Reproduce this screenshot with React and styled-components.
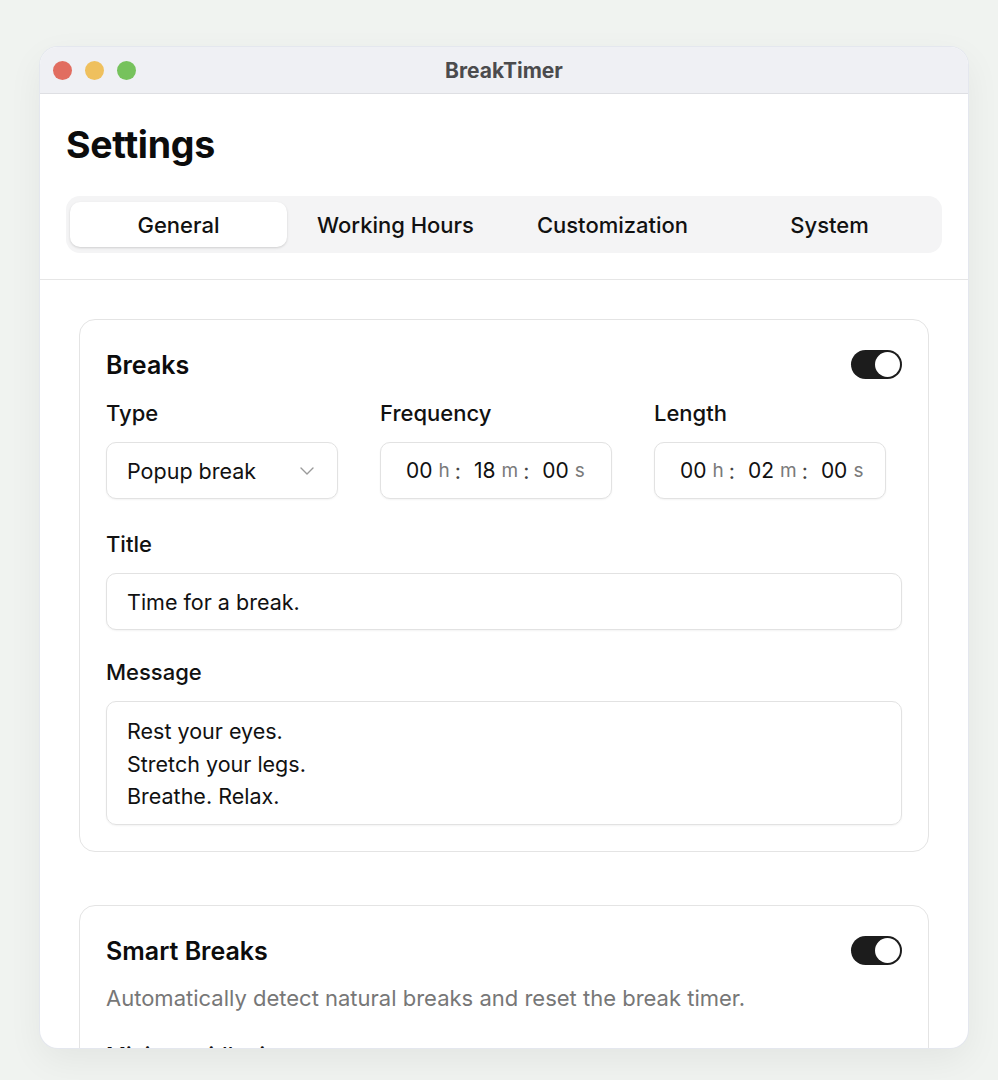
import styled, { createGlobalStyle } from "styled-components";

const GlobalStyle = createGlobalStyle`
  html, body {
    margin: 0;
    padding: 0;
    background: #f0f3f0;
  }
  body {
    font-family: Inter, "Noto Sans", "Liberation Sans", sans-serif;
    color: #111;
  }
`;

const Page = styled.div`
  padding: 47px 30px 32px 40px;
`;

const Window = styled.div`
  width: 928px;
  height: 1001px;
  background: #fff;
  border-radius: 18px;
  overflow: hidden;
  display: flex;
  flex-direction: column;
  box-shadow: 0 0 0 1px #e4e7ee, 0 12px 36px rgba(0, 0, 0, 0.06);
`;

const TitleBar = styled.div`
  height: 46px;
  flex-shrink: 0;
  background: #eff0f4;
  border-bottom: 1px solid #dedfe3;
  display: flex;
  align-items: center;
  position: relative;
  padding-left: 13px;
`;

const Lights = styled.div`
  display: flex;
  gap: 13px;
`;

const Light = styled.span`
  width: 19px;
  height: 19px;
  border-radius: 50%;
  background: ${(p) => p.color};
`;

const WindowTitle = styled.div`
  position: absolute;
  left: 0;
  right: 0;
  text-align: center;
  font-size: 21px;
  font-weight: 700;
  color: #4b4b4d;
`;

const Header = styled.div`
  padding: 30px 26px 26px;
  border-bottom: 1px solid #e6e6e6;
`;

const Heading = styled.h1`
  margin: 0 0 30px;
  font-size: 37.5px;
  line-height: 42px;
  font-weight: 700;
  color: #0c0c0c;
  letter-spacing: -0.3px;
`;

const Tabs = styled.div`
  display: grid;
  grid-template-columns: repeat(4, 1fr);
  padding: 6px 4px;
  background: #f4f4f5;
  border-radius: 14px;
`;

const Tab = styled.div`
  height: 45px;
  display: flex;
  align-items: center;
  justify-content: center;
  font-size: 22px;
  font-weight: 500;
  color: #111;
  border-radius: 10px;
  background: ${(p) => (p.active ? "#fff" : "transparent")};
  box-shadow: ${(p) =>
    p.active ? "0 1px 3px rgba(0,0,0,0.1), 0 1px 2px rgba(0,0,0,0.06)" : "none"};
`;

const Content = styled.div`
  flex: 1;
  overflow: hidden;
  padding: 39px 39px 0;
  display: flex;
  flex-direction: column;
  gap: 53px;
`;

const Card = styled.section`
  border: 1px solid #e4e4e4;
  border-radius: 16px;
  padding: 30px 26px 26px;
  flex-shrink: 0;
`;

const CardHead = styled.div`
  display: flex;
  align-items: center;
  justify-content: space-between;
  height: 29px;
`;

const CardTitle = styled.h2`
  margin: 0;
  font-size: 25px;
  font-weight: 600;
  color: #0c0c0c;
`;

const Switch = styled.div`
  width: 51px;
  height: 29px;
  border-radius: 15px;
  background: #1c1c1c;
  position: relative;
  &::after {
    content: "";
    position: absolute;
    right: 2px;
    top: 2px;
    width: 25px;
    height: 25px;
    border-radius: 50%;
    background: #fff;
  }
`;

const Row = styled.div`
  display: grid;
  grid-template-columns: repeat(3, 248px);
  column-gap: 26px;
  margin-top: 21px;
`;

const Field = styled.div`
  display: flex;
  flex-direction: column;
  margin-top: ${(p) => p.top || 0}px;
`;

const Label = styled.label`
  font-size: 22px;
  font-weight: 500;
  line-height: 26px;
  color: #111;
  margin-bottom: 16px;
`;

const Box = styled.div`
  box-sizing: border-box;
  width: ${(p) => (p.full ? "100%" : "232px")};
  height: 57px;
  border: 1px solid #e2e2e2;
  border-radius: 10px;
  box-shadow: 0 1px 2px rgba(0, 0, 0, 0.05);
  background: #fff;
  display: flex;
  align-items: center;
  padding: 0 20px;
  font-size: 21.5px;
  color: #111;
`;

const SelectBox = styled(Box)`
  justify-content: space-between;
  padding-right: 22px;
`;

const TimeBox = styled(Box)`
  padding-left: 25px;
`;

const Digits = styled.span`
  font-size: 21px;
  color: #111;
`;

const Unit = styled.span`
  font-size: 19px;
  color: #7a7a7a;
  margin: 0 5px 0 6px;
`;

const Colon = styled.span`
  color: #444;
  margin-right: 13px;
`;

const MessageBox = styled.div`
  box-sizing: border-box;
  width: 100%;
  height: 124px;
  border: 1px solid #e2e2e2;
  border-radius: 10px;
  box-shadow: 0 1px 2px rgba(0, 0, 0, 0.05);
  padding: 13px 20px;
  font-size: 21.5px;
  line-height: 32.5px;
  color: #111;
  white-space: pre-line;
`;

const Description = styled.p`
  margin: 19px 0 0;
  font-size: 22px;
  line-height: 28px;
  color: #777;
`;

const Chevron = () => (
  <svg width="16" height="10" viewBox="0 0 16 10" fill="none">
    <path d="M2 2l6 6 6-6" stroke="#9a9a9a" strokeWidth="1.4" strokeLinecap="round" strokeLinejoin="round" />
  </svg>
);

function Duration({ h, m, s }) {
  return (
    <TimeBox>
      <Digits>{h}</Digits>
      <Unit>h</Unit>
      <Colon>:</Colon>
      <Digits>{m}</Digits>
      <Unit>m</Unit>
      <Colon>:</Colon>
      <Digits>{s}</Digits>
      <Unit>s</Unit>
    </TimeBox>
  );
}

export default function App() {
  const tabs = ["General", "Working Hours", "Customization", "System"];

  return (
    <Page>
      <GlobalStyle />
      <Window>
        <TitleBar>
          <Lights>
            <Light color="#e16d60" />
            <Light color="#efc05d" />
            <Light color="#76c25c" />
          </Lights>
          <WindowTitle>BreakTimer</WindowTitle>
        </TitleBar>

        <Header>
          <Heading>Settings</Heading>
          <Tabs>
            {tabs.map((t, i) => (
              <Tab key={t} active={i === 0}>
                {t}
              </Tab>
            ))}
          </Tabs>
        </Header>

        <Content>
          <Card>
            <CardHead>
              <CardTitle>Breaks</CardTitle>
              <Switch />
            </CardHead>
            <Row>
              <Field>
                <Label>Type</Label>
                <SelectBox>
                  Popup break
                  <Chevron />
                </SelectBox>
              </Field>
              <Field>
                <Label>Frequency</Label>
                <Duration h="00" m="18" s="00" />
              </Field>
              <Field>
                <Label>Length</Label>
                <Duration h="00" m="02" s="00" />
              </Field>
            </Row>
            <Field top={32}>
              <Label>Title</Label>
              <Box full>Time for a break.</Box>
            </Field>
            <Field top={29}>
              <Label>Message</Label>
              <MessageBox>{"Rest your eyes.\nStretch your legs.\nBreathe. Relax."}</MessageBox>
            </Field>
          </Card>

          <Card>
            <CardHead>
              <CardTitle>Smart Breaks</CardTitle>
              <Switch />
            </CardHead>
            <Description>
              Automatically detect natural breaks and reset the break timer.
            </Description>
            <Field top={30}>
              <Label>Minimum idle time</Label>
              <Duration h="00" m="05" s="00" />
            </Field>
          </Card>
        </Content>
      </Window>
    </Page>
  );
}
